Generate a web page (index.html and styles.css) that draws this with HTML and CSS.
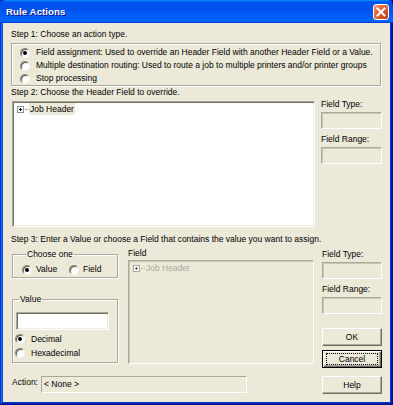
FILE: index.html
```html
<!DOCTYPE html>
<html>
<head>
<meta charset="utf-8">
<title>Rule Actions</title>
<link rel="stylesheet" href="styles.css">
</head>
<body>
<div class="window">
  <div class="titlebar">
    <span class="title">Rule Actions</span>
    <span class="close"><svg width="14" height="14" viewBox="0 0 14 14"><path d="M3.5 3.5 L10.5 10.5 M10.5 3.5 L3.5 10.5" stroke="#fff" stroke-width="2" stroke-linecap="square"/></svg></span>
  </div>
  <div class="client">
    <div class="step step1">Step 1: Choose an action type.</div>
    <div class="group actions">
      <label class="radio-row"><span class="radio on"></span>Field assignment: Used to override an Header Field with another Header Field or a Value.</label>
      <label class="radio-row"><span class="radio"></span>Multiple destination routing: Used to route a job to multiple printers and/or printer groups</label>
      <label class="radio-row"><span class="radio"></span>Stop processing</label>
    </div>

    <div class="step step2">Step 2: Choose the Header Field to override.</div>
    <div class="row2">
      <div class="tree">
        <div class="node">
          <svg class="expander" width="7" height="7" viewBox="0 0 7 7"><rect x="0.5" y="0.5" width="6" height="6" fill="#fff" stroke="#8E8F8F"/><path d="M2 3.5 H5 M3.5 2 V5" stroke="#000"/></svg>
          <span class="dots"></span>
          <span class="node-label sel">Job Header</span>
        </div>
      </div>
      <div class="side side2">
        <div class="side-label">Field Type:</div>
        <div class="field-box"></div>
        <div class="side-label second">Field Range:</div>
        <div class="field-box"></div>
      </div>
    </div>

    <div class="step step3">Step 3: Enter a Value or choose a Field that contains the value you want to assign.</div>
    <div class="row3">
      <div class="main3">
        <div class="upper3">
          <div class="leftcol">
            <fieldset class="fs choose">
              <legend>Choose one</legend>
              <div class="choice-row">
                <label class="radio-row"><span class="radio on"></span>Value</label>
                <label class="radio-row"><span class="radio"></span>Field</label>
              </div>
            </fieldset>
            <fieldset class="fs value">
              <legend>Value</legend>
              <div class="value-input"></div>
              <label class="radio-row tall first"><span class="radio on"></span>Decimal</label>
              <label class="radio-row tall"><span class="radio"></span>Hexadecimal</label>
            </fieldset>
          </div>
          <div class="fieldcol">
            <div class="field-caption">Field</div>
            <div class="field-tree">
              <div class="node">
                <svg class="expander" width="7" height="7" viewBox="0 0 7 7"><rect x="0.5" y="0.5" width="6" height="6" fill="#fff" stroke="#A8A89A"/><path d="M2 3.5 H5 M3.5 2 V5" stroke="#666"/></svg>
                <span class="dots light"></span>
                <span class="node-label disabled">Job Header</span>
              </div>
            </div>
          </div>
        </div>
        <div class="action-row">
          <span class="action-label">Action:</span>
          <div class="action-box">&lt; None &gt;</div>
        </div>
      </div>
      <div class="side side3">
        <div class="side-label">Field Type:</div>
        <div class="field-box"></div>
        <div class="side-label second">Field Range:</div>
        <div class="field-box"></div>
        <button class="btn ok">OK</button>
        <button class="btn cancel"><span class="focus">Cancel</span></button>
        <button class="btn help">Help</button>
      </div>
    </div>
  </div>
</div>
</body>
</html>
```

FILE: styles.css
```css
html, body {
  margin: 0;
  padding: 0;
  background: #fff;
}

body {
  font-family: "Liberation Sans", Arial, sans-serif;
  font-size: 8.5px;
  color: #000;
}

.window {
  width: 393px;
  height: 405px;
  box-sizing: border-box;
  padding: 0 3px 3px 3px;
  background: #ECE9D8;
  box-shadow: inset -1px -1px #00138c, inset 1px 1px #0831d9, inset -2px -2px #001ea0, inset 2px 2px #166aee, inset -3px -3px #003bda, inset 3px 3px #0855dd;
  display: flex;
  flex-direction: column;
}

.titlebar {
  height: 23px;
  margin: 0 -3px;
  padding: 0 4px 0 6px;
  display: flex;
  align-items: center;
  justify-content: space-between;
  background: linear-gradient(180deg, #0997ff, #0053ee 8%, #0050ee 40%, #0066ff 88%, #0066ff 93%, #005bff 95%, #003dd7 96%, #003dd7);
  border-radius: 6px 6px 0 0;
}

.title {
  color: #fff;
  font-weight: bold;
  font-size: 9.6px;
  letter-spacing: 0.1px;
  text-shadow: 1px 1px #0f1089;
}

.close {
  width: 16px;
  height: 16px;
  box-sizing: border-box;
  border: 1px solid #fff;
  border-radius: 3px;
  display: flex;
  align-items: center;
  justify-content: center;
  background: radial-gradient(circle at 85% 85%, #c23e10 0%, #dc5a2a 45%, #e5764c 75%, #f3b69a 100%);
  margin-top: 1px;
}

.client {
  padding: 6px 8px 0 8px;
  line-height: 11px;
}

.step {
  height: 11px;
  white-space: nowrap;
}

.step2 { margin-top: 1px; }
.step3 { margin-top: 7px; }

.group {
  box-sizing: border-box;
  border: 1px solid #ACA899;
  box-shadow: 1px 1px 0 #fff, inset 1px 1px 0 #fff;
}

.actions {
  margin-top: 3px;
  width: 370px;
  height: 43px;
  padding: 2px 0 0 8px;
}

.radio-row {
  display: flex;
  align-items: center;
  height: 13px;
  white-space: nowrap;
}

.radio-row.tall { height: 14px; }

.radio {
  width: 10px;
  height: 10px;
  box-sizing: border-box;
  border-radius: 50%;
  border: 1px solid;
  border-color: #8B887A #F6F5EF #F6F5EF #8B887A;
  box-shadow: inset 1px 1px 0 #5E5C52;
  background: #fff;
  margin-right: 6px;
  position: relative;
  flex: none;
}

.radio.on::after {
  content: "";
  position: absolute;
  left: 2px;
  top: 2px;
  width: 4px;
  height: 4px;
  border-radius: 50%;
  background: #000;
}

.row2 {
  display: flex;
  margin-top: 3px;
}

.tree {
  margin-left: 1px;
  width: 303px;
  height: 126px;
  box-sizing: border-box;
  background: #fff;
  border: 1px solid;
  border-color: #ACA899 #fff #fff #ACA899;
  box-shadow: inset 1px 1px 0 #716F64, inset -1px -1px 0 #F1EFE2;
  padding: 1px 1px;
}

.node {
  display: flex;
  align-items: center;
  height: 12px;
  padding-left: 3px;
}

.expander { flex: none; }

.dots {
  width: 4px;
  border-top: 1px dotted #8E8F8F;
  margin: 0 0 0 1px;
}

.dots.light { border-top-color: #B8B5A6; }

.node-label {
  padding: 0 1px;
  margin-left: 0;
  line-height: 12px;
}

.node-label.sel { background: #ECE9D8; }
.node-label.disabled { color: #ACA899; }

.side {
  display: flex;
  flex-direction: column;
}

.side2 {
  margin-left: 6px;
  width: 61px;
  margin-top: -2px;
}

.side-label {
  height: 11px;
  white-space: nowrap;
}

.field-box {
  margin-top: 2px;
  height: 17px;
  box-sizing: border-box;
  border: 1px solid;
  border-color: #ACA899 #fff #fff #ACA899;
  box-shadow: inset 1px 1px 0 #C9C6B6;
}

.side-label.second { margin-top: 5px; }

.row3 {
  display: flex;
}

.main3 {
  width: 304px;
  display: flex;
  flex-direction: column;
}

.upper3 {
  display: flex;
}

.leftcol {
  width: 107px;
  box-sizing: border-box;
  padding-left: 1px;
  display: flex;
  flex-direction: column;
}

.fs {
  margin: 0;
  min-width: 0;
  border: 1px solid #ACA899;
  box-shadow: 1px 1px 0 #fff, inset 1px 1px 0 #fff;
  width: 106px;
  box-sizing: border-box;
}

.fs legend {
  padding: 0 1px;
  margin-left: 4px;
  line-height: 11px;
  height: 11px;
}

.choose {
  margin-top: 4px;
  padding: 3px 0 1px 9px;
}

.choice-row {
  display: grid;
  grid-template-columns: 47px auto;
}

.choose .radio { margin-right: 4px; }

.value {
  margin-top: 16px;
  padding: 7px 0 2px 2px;
}

.value-input {
  margin-left: 1px;
  width: 93px;
  height: 18px;
  box-sizing: border-box;
  background: #fff;
  border: 1px solid;
  border-color: #ACA899 #fff #fff #ACA899;
  box-shadow: inset 1px 1px 0 #716F64, inset -1px -1px 0 #F1EFE2;
}

.radio-row.first { margin-top: 2px; }

.fieldcol {
  margin-left: 10px;
  width: 186px;
  display: flex;
  flex-direction: column;
}

.field-caption {
  margin-top: 3px;
  height: 11px;
}

.field-tree {
  margin-top: 1px;
  height: 104px;
  box-sizing: border-box;
  border: 1px solid;
  border-color: #ACA899 #fff #fff #ACA899;
  box-shadow: inset 1px 1px 0 #C9C6B6;
  padding: 1px 1px;
}

.action-row {
  margin-top: 12px;
  display: flex;
  align-items: flex-start;
}

.action-label {
  width: 30px;
  padding-left: 1px;
  box-sizing: border-box;
  line-height: 11px;
  margin-top: 1px;
}

.action-box {
  width: 206px;
  height: 17px;
  box-sizing: border-box;
  border: 1px solid;
  border-color: #ACA899 #fff #fff #ACA899;
  line-height: 15px;
  padding-left: 2px;
  white-space: nowrap;
}

.side3 {
  margin-left: 8px;
  width: 60px;
}

.side3 .side-label:first-child { margin-top: 4px; }

.btn {
  font-family: inherit;
  font-size: 8.5px;
  color: #000;
  height: 18px;
  width: 60px;
  padding: 0;
  box-sizing: border-box;
  background: #ECE9D8;
  border: 1px solid;
  border-color: #fff #716F64 #716F64 #fff;
  box-shadow: inset -1px -1px 0 #ACA899;
  display: flex;
  align-items: center;
  justify-content: center;
}

.ok { margin-top: 14px; }

.cancel {
  margin-top: 4px;
  border-color: #000;
  box-shadow: inset 1px 1px 0 #fff, inset -1px -1px 0 #716F64, inset -2px -2px 0 #ACA899;
}

.focus {
  display: flex;
  align-items: center;
  justify-content: center;
  width: 52px;
  height: 12px;
  border: 1px dotted #000;
  box-sizing: border-box;
}

.help { margin-top: 8px; }
```
